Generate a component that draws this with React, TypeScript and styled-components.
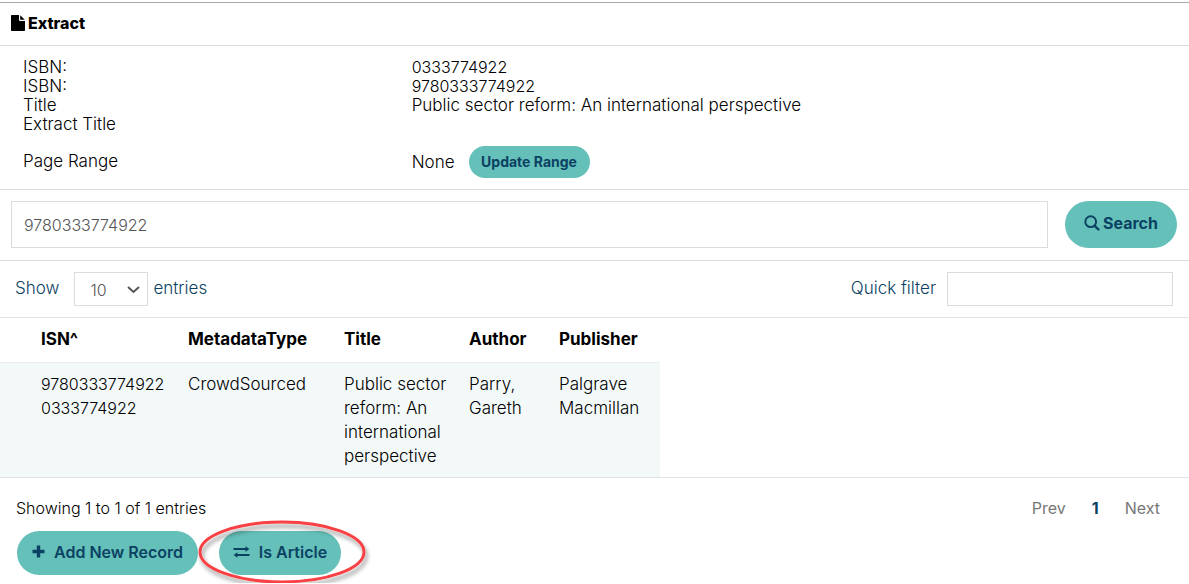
import React from "react";
import styled, { createGlobalStyle } from "styled-components";

const teal = "#65c0b9";
const navy = "#0b4263";
const line = "#dcdcdc";

const GlobalStyle = createGlobalStyle`
  * { box-sizing: border-box; }
  body { margin: 0; background: #fff; color: #000; }
  body, button, input, select {
    font-family: Inter, "Open Sans", "Liberation Sans", sans-serif;
    font-size: 17px;
  }
`;

const Page = styled.main`
  border-top: 1px solid #a9a9a9;
  margin-top: 2px;
  font-weight: 300;
`;

const Header = styled.header`
  display: flex;
  align-items: center;
  gap: 3px;
  height: 43px;
  padding: 0 11px 2px;
  border-bottom: 1px solid ${line};
`;

const Heading = styled.h1`
  margin: 0;
  font-size: 16px;
  font-weight: 800;
`;

const Details = styled.dl`
  display: grid;
  grid-template-columns: 1fr 2fr;
  margin: 0;
  padding: 12px 0 11px 23px;
  line-height: 19px;
  border-bottom: 1px solid ${line};
`;

const Term = styled.dt<{ $spaced?: boolean }>`
  margin-top: ${(p) => (p.$spaced ? 18 : 0)}px;
`;

const Value = styled.dd<{ $spaced?: boolean }>`
  display: flex;
  align-items: center;
  gap: 14px;
  margin: ${(p) => (p.$spaced ? 12 : 0)}px 0 0;
`;

const Digits = styled.span`
  font-size: 16px;
`;

const Pill = styled.button<{ $size: "small" | "medium" | "large"; $width: number }>`
  display: inline-flex;
  align-items: center;
  justify-content: center;
  gap: ${(p) => (p.$size === "medium" ? 9 : 3)}px;
  min-width: ${(p) => p.$width}px;
  height: ${(p) => ({ small: 32, medium: 44, large: 47 })[p.$size]}px;
  padding: 0 8px ${(p) => ({ small: 2, medium: 2, large: 4 })[p.$size]}px;
  border: 0;
  border-radius: 24px;
  background: ${teal};
  color: ${navy};
  font-size: ${(p) => (p.$size === "small" ? 14 : 16)}px;
  font-weight: ${(p) => (p.$size === "medium" ? 600 : 700)};
  white-space: nowrap;
`;

const SearchForm = styled.form`
  display: flex;
  gap: 17px;
  padding: 11px 12px 12px 11px;
  border-bottom: 1px solid ${line};
`;

const TextBox = styled.input`
  border: 1px solid ${line};
  border-radius: 0;
  background: #fff;
  color: #555;
  font-size: 16px;
  font-weight: 300;
  outline: 0;
`;

const SearchBox = styled(TextBox)`
  flex: 1;
  min-width: 0;
  height: 47px;
  padding: 0 12px;
`;

const FilterBox = styled(TextBox)`
  width: 226px;
  height: 34px;
  padding: 0 8px;
`;

const Toolbar = styled.div`
  display: flex;
  justify-content: space-between;
  padding: 11px 16px 11px 15px;
  color: ${navy};
  border-bottom: 1px solid #e3e3e3;
`;

const Field = styled.div<{ $gap: number }>`
  display: flex;
  align-items: center;
  gap: ${(p) => p.$gap}px;
`;

const Label = styled.label`
  padding-bottom: 3px;
`;

const SelectWrap = styled.span`
  position: relative;
  display: inline-flex;
  margin-left: 10px;
`;

const Select = styled.select`
  appearance: none;
  width: 74px;
  height: 34px;
  padding: 2px 28px 0 15px;
  border: 1px solid ${line};
  border-radius: 0;
  background: #fff;
  color: #555;
  font-size: 16px;
  font-weight: 300;
`;

const Chevron = styled.svg`
  position: absolute;
  right: 8px;
  top: 14px;
  pointer-events: none;
`;

const TableWrap = styled.section`
  border-bottom: 1px solid #dfe3e3;
`;

const Table = styled.table`
  width: 660px;
  max-width: 100%;
  table-layout: fixed;
  border-collapse: collapse;
  line-height: 24px;
  text-align: left;
`;

const Th = styled.th`
  height: 44px;
  padding: 0 8px 2px;
  font-size: 17px;
  font-weight: 700;
  border-bottom: 1px solid #e8ecec;
  &:first-child { padding-left: 41px; }
`;

const Td = styled.td`
  padding: 9px 8px;
  vertical-align: top;
  background: #f3f9f9;
  &:first-child { padding-left: 41px; }
`;

const Footer = styled.footer`
  padding: 18px 16px 8px;
`;

const FooterRow = styled.div`
  display: flex;
  align-items: center;
  justify-content: space-between;
  height: 24px;
  font-size: 16px;
`;

const Pager = styled.nav`
  display: flex;
  gap: 26px;
  padding-right: 13px;
`;

const PageLink = styled.a<{ $current?: boolean }>`
  color: ${(p) => (p.$current ? navy : "#777")};
  font-weight: ${(p) => (p.$current ? 700 : 400)};
  text-decoration: none;
`;

const Actions = styled.div`
  display: flex;
  gap: 21px;
  padding: 11px 1px 0;
`;

const Marked = styled.div`
  position: relative;
`;

const Ring = styled.svg`
  position: absolute;
  left: -21px;
  top: -13px;
  pointer-events: none;
  overflow: visible;
`;

const columns = [
  { name: "ISN^", width: 180 },
  { name: "MetadataType", width: 156 },
  { name: "Title", width: 125 },
  { name: "Author", width: 90 },
  { name: "Publisher", width: 109 },
];

function FileIcon() {
  return (
    <svg width="14" height="16" viewBox="0 0 14 16" fill="currentColor" aria-hidden="true">
      <path d="M1 0h7v5.200c0 .5.300.8.800.800H14v9c0 .6-.4 1-1 1H1c-.6 0-1-.4-1-1V1c0-.6.4-1 1-1z" />
      <path d="M9.200 0.200L13.800 4.800H9.200z" />
    </svg>
  );
}

function SearchIcon() {
  return (
    <svg width="16" height="16" viewBox="0 0 16 16" fill="none" stroke="currentColor" aria-hidden="true">
      <circle cx="6.700" cy="6.700" r="5.400" strokeWidth="2" />
      <path d="M10.600 10.800L14.400 14.400" strokeWidth="2.400" strokeLinecap="round" />
    </svg>
  );
}

function PlusIcon() {
  return (
    <svg width="13" height="13" viewBox="0 0 13 13" fill="none" stroke="currentColor" strokeWidth="3.400" aria-hidden="true">
      <path d="M6.500 0.500v12M0.500 6.500h12" />
    </svg>
  );
}

function ExchangeIcon() {
  return (
    <svg width="17" height="12" viewBox="0 0 17 12" fill="currentColor" aria-hidden="true">
      <path d="M0.500 2h12V0.300L16.500 3l-4 2.700V4h-12z" />
      <path d="M16.500 8h-12V6.300L0.500 9l4 2.700V10h12z" />
    </svg>
  );
}

export default function App() {
  return (
    <>
      <GlobalStyle />
      <Page>
        <Header>
          <FileIcon />
          <Heading>Extract</Heading>
        </Header>

        <Details>
          <Term>ISBN:</Term>
          <Value><Digits>0333774922</Digits></Value>
          <Term>ISBN:</Term>
          <Value><Digits>9780333774922</Digits></Value>
          <Term>Title</Term>
          <Value>Public sector reform: An international perspective</Value>
          <Term>Extract Title</Term>
          <Value />
          <Term $spaced>Page Range</Term>
          <Value $spaced>
            None
            <Pill type="button" $size="small" $width={121}>Update Range</Pill>
          </Value>
        </Details>

        <SearchForm onSubmit={(e) => e.preventDefault()}>
          <SearchBox type="text" aria-label="Search term" defaultValue="9780333774922" />
          <Pill type="submit" $size="large" $width={112}>
            <SearchIcon />
            Search
          </Pill>
        </SearchForm>

        <Toolbar>
          <Field $gap={5}>
            <Label htmlFor="page-size">Show</Label>
            <SelectWrap>
              <Select id="page-size" defaultValue="10">
                <option>10</option>
                <option>25</option>
                <option>50</option>
              </Select>
              <Chevron width="13" height="8" viewBox="0 0 13 8" fill="none" stroke="#555" strokeWidth="2">
                <path d="M1 1l5.500 5L12 1" />
              </Chevron>
            </SelectWrap>
            <Label htmlFor="page-size">entries</Label>
          </Field>
          <Field $gap={11}>
            <Label htmlFor="quick-filter">Quick filter</Label>
            <FilterBox id="quick-filter" type="text" />
          </Field>
        </Toolbar>

        <TableWrap>
          <Table>
            <colgroup>
              {columns.map((c) => (
                <col key={c.name} width={c.width} />
              ))}
            </colgroup>
            <thead>
              <tr>
                {columns.map((c) => (
                  <Th key={c.name} scope="col">{c.name}</Th>
                ))}
              </tr>
            </thead>
            <tbody>
              <tr>
                <Td><Digits>9780333774922 0333774922</Digits></Td>
                <Td>CrowdSourced</Td>
                <Td>Public sector reform: An international perspective</Td>
                <Td>Parry, Gareth</Td>
                <Td>Palgrave Macmillan</Td>
              </tr>
            </tbody>
          </Table>
        </TableWrap>

        <Footer>
          <FooterRow>
            <span>Showing 1 to 1 of 1 entries</span>
            <Pager aria-label="Pages">
              <PageLink href="#prev">Prev</PageLink>
              <PageLink href="#1" $current>1</PageLink>
              <PageLink href="#next">Next</PageLink>
            </Pager>
          </FooterRow>
          <Actions>
            <Pill type="button" $size="medium" $width={181}>
              <PlusIcon />
              Add New Record
            </Pill>
            <Marked>
              <Pill type="button" $size="medium" $width={122}>
                <ExchangeIcon />
                Is Article
              </Pill>
              <Ring width="168" height="66" viewBox="0 0 168 66" aria-hidden="true">
                <defs>
                  <filter id="ring-shadow" x="-10%" y="-10%" width="120%" height="130%">
                    <feDropShadow dx="2" dy="4" stdDeviation="2" floodColor="#000" floodOpacity="0.4" />
                  </filter>
                </defs>
                <ellipse cx="84" cy="34" rx="82" ry="30" fill="none" stroke="#f94144" strokeWidth="3" filter="url(#ring-shadow)" />
              </Ring>
            </Marked>
          </Actions>
        </Footer>
      </Page>
    </>
  );
}
